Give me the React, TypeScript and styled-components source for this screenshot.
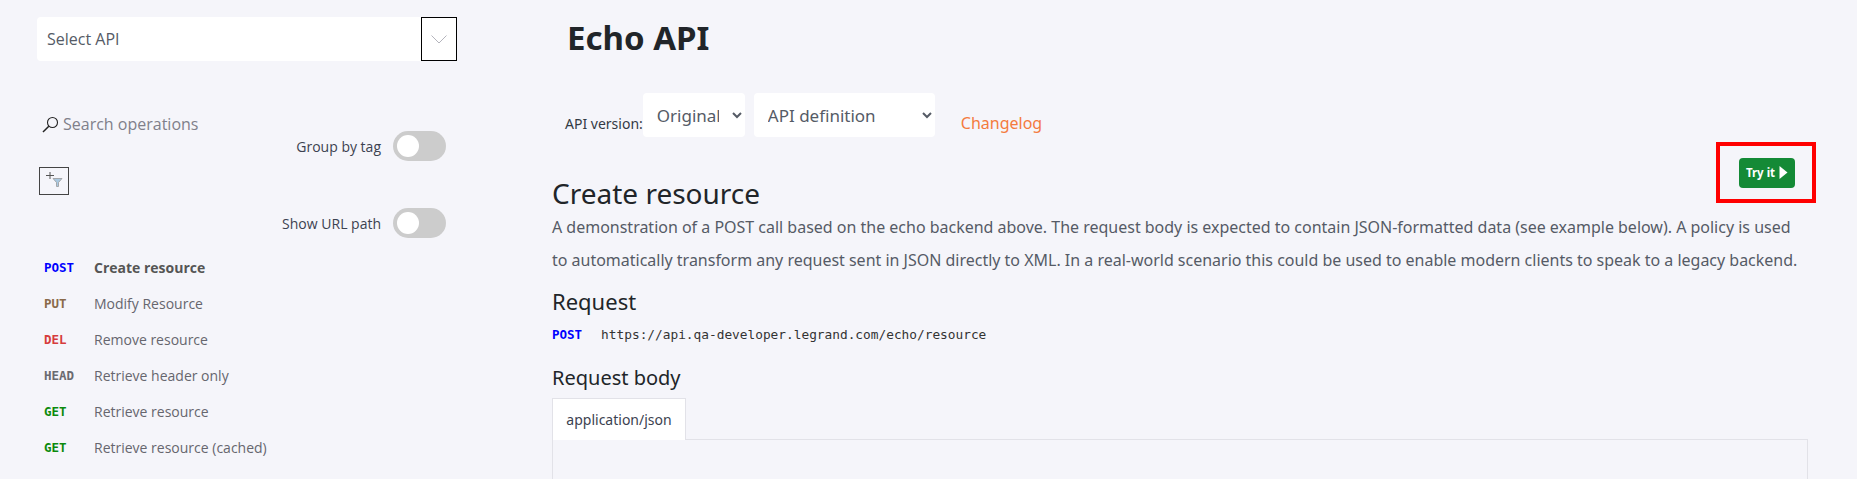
import styled, { createGlobalStyle } from 'styled-components'

const methodColors: Record<string, string> = {
  POST: '#0000ff',
  PUT: '#8a6a4a',
  DEL: '#d63c3c',
  HEAD: '#6a6a70',
  GET: '#0c8a0c',
}

const operations = [
  { method: 'POST', name: 'Create resource', active: true },
  { method: 'PUT', name: 'Modify Resource' },
  { method: 'DEL', name: 'Remove resource' },
  { method: 'HEAD', name: 'Retrieve header only' },
  { method: 'GET', name: 'Retrieve resource' },
  { method: 'GET', name: 'Retrieve resource (cached)' },
]

function App() {
  return (
    <>
      <GlobalStyle />
      <Page>
        <Sidebar>
          <ApiPicker>
            <ApiPickerText>Select API</ApiPickerText>
            <ChevronBox>
              <svg width="16" height="9" viewBox="0 0 16 9" fill="none">
                <path d="M0.5 0.5 L8 8 L15.5 0.5" stroke="#b4b4bc" strokeWidth="1" />
              </svg>
            </ChevronBox>
          </ApiPicker>
          <SearchRow>
            <svg width="17" height="17" viewBox="0 0 17 17" fill="none">
              <circle cx="10.5" cy="6.5" r="5" stroke="#222" strokeWidth="1.1" />
              <path d="M6.8 10.2 L1 16" stroke="#222" strokeWidth="1.5" />
            </svg>
            <SearchText>Search operations</SearchText>
          </SearchRow>
          <ToggleRow>
            <ToggleLabel>Group by tag</ToggleLabel>
            <Toggle />
          </ToggleRow>
          <FilterButton>
            <svg width="22" height="20" viewBox="0 0 22 20" fill="none">
              <path d="M3 4.500 H11 M7 1 V8" stroke="#555" strokeWidth="1" />
              <path d="M10 7.500 H19 L15.500 11.500 V15.500 H13.500 V11.500 Z" fill="#a9c8e0" stroke="#999" strokeWidth="0.8" />
            </svg>
          </FilterButton>
          <ToggleRow $tight>
            <ToggleLabel>Show URL path</ToggleLabel>
            <Toggle />
          </ToggleRow>
          <OperationList>
            {operations.map((op) => (
              <Operation key={op.name}>
                <Method $color={methodColors[op.method]}>{op.method}</Method>
                <OperationName $active={op.active}>{op.name}</OperationName>
              </Operation>
            ))}
          </OperationList>
        </Sidebar>
        <Main>
          <Title>Echo API</Title>
          <VersionRow>
            <VersionLabel>API version:</VersionLabel>
            <Picker $width={102} defaultValue="Original">
              <option>Original</option>
            </Picker>
            <Picker $width={181} defaultValue="API definition">
              <option>API definition</option>
            </Picker>
            <Changelog>Changelog</Changelog>
          </VersionRow>
          <TryItFrame>
            <TryIt>
              Try it
              <svg width="9" height="13" viewBox="0 0 9 13">
                <path d="M0.5 0 L8.500 6.500 L0.5 13 Z" fill="#fff" />
              </svg>
            </TryIt>
          </TryItFrame>
          <OperationTitle>Create resource</OperationTitle>
          <Description>
            A demonstration of a POST call based on the echo backend above. The request body is
            expected to contain JSON-formatted data (see example below). A policy is used to
            automatically transform any request sent in JSON directly to XML. In a real-world
            scenario this could be used to enable modern clients to speak to a legacy backend.
          </Description>
          <SectionTitle>Request</SectionTitle>
          <RequestLine>
            <RequestMethod>POST</RequestMethod>
            <RequestUrl>https://api.qa-developer.legrand.com/echo/resource</RequestUrl>
          </RequestLine>
          <BodyTitle>Request body</BodyTitle>
          <Tab>application/json</Tab>
          <TabPanel />
        </Main>
      </Page>
    </>
  )
}

const GlobalStyle = createGlobalStyle`
  html, body {
    margin: 0;
    height: 100%;
    overflow: hidden;
    background: #f5f5fa;
  }
`

const Page = styled.div`
  display: flex;
  width: 1857px;
  height: 479px;
  overflow: hidden;
  background: #f5f5fa;
  font-family: 'Noto Sans', sans-serif;
`

const Sidebar = styled.aside`
  width: 420px;
  margin-left: 37px;
  padding-top: 17px;
  flex-shrink: 0;
  font-family: 'Open Sans', sans-serif;
`

const ApiPicker = styled.div`
  display: flex;
  align-items: center;
  justify-content: space-between;
  height: 44px;
  background: #fff;
  border-radius: 4px;
`

const ApiPickerText = styled.span`
  margin-left: 10px;
  font-size: 16px;
  color: #555b66;
`

const ChevronBox = styled.div`
  display: flex;
  align-items: center;
  justify-content: center;
  box-sizing: border-box;
  width: 36px;
  height: 44px;
  border: 1px solid #000;
`

const SearchRow = styled.div`
  display: flex;
  align-items: center;
  gap: 4px;
  height: 24px;
  margin: 51px 0 0 5px;
`

const SearchText = styled.span`
  font-size: 16px;
  color: #80808a;
`

const ToggleRow = styled.div<{ $tight?: boolean }>`
  display: flex;
  align-items: center;
  justify-content: flex-end;
  gap: 12px;
  height: 30px;
  margin-top: ${({ $tight }) => ($tight ? '13px' : '-5px')};
  padding-right: 11px;
`

const ToggleLabel = styled.span`
  font-size: 14px;
  color: #3c4250;
`

const Toggle = styled.div`
  position: relative;
  width: 53px;
  height: 30px;
  border-radius: 15px;
  background: #ccc;

  &::before {
    content: '';
    position: absolute;
    left: 4px;
    top: 4px;
    width: 22px;
    height: 22px;
    border-radius: 50%;
    background: #fff;
  }
`

const FilterButton = styled.div`
  display: flex;
  align-items: center;
  justify-content: center;
  box-sizing: border-box;
  width: 30px;
  height: 28px;
  margin: 6px 0 0 2px;
  border: 1px solid #444;
`

const OperationList = styled.ul`
  list-style: none;
  margin: 11px 0 0;
  padding: 0 0 0 7px;
`

const Operation = styled.li`
  display: flex;
  align-items: center;
  height: 36px;
`

const Method = styled.span<{ $color: string }>`
  width: 50px;
  font-family: 'DejaVu Sans Mono', monospace;
  font-size: 12.5px;
  font-weight: 700;
  color: ${({ $color }) => $color};
`

const OperationName = styled.span<{ $active?: boolean }>`
  font-size: 14px;
  font-weight: ${({ $active }) => ($active ? 700 : 400)};
  color: ${({ $active }) => ($active ? '#555' : '#66666e')};
`

const Main = styled.main`
  position: relative;
  flex: 1;
  margin-left: 95px;
  margin-right: 41px;
`

const Title = styled.h1`
  margin: 16px 0 0 15px;
  font-size: 33px;
  line-height: 44px;
  font-weight: 700;
  color: #212529;
`

const VersionRow = styled.div`
  display: flex;
  align-items: flex-start;
  margin: 33px 0 0 13px;
  height: 44px;
`

const VersionLabel = styled.span`
  margin-top: 21px;
  font-size: 14px;
  line-height: 20px;
  color: #333a45;
`

const Picker = styled.select<{ $width: number }>`
  width: ${({ $width }) => $width}px;
  height: 44px;
  margin-right: 9px;
  padding: 0 10px;
  border: none;
  border-radius: 4px;
  background-color: #fff;
  font-family: 'Noto Sans', sans-serif;
  font-size: 17px;
  line-height: 22px;
  color: #555b66;
`

const Changelog = styled.a`
  margin: 18px 0 0 17px;
  font-size: 16px;
  line-height: 24px;
  color: #f47b3e;
`

const TryItFrame = styled.div`
  position: absolute;
  right: 0;
  top: 142px;
  display: flex;
  align-items: center;
  justify-content: center;
  box-sizing: border-box;
  width: 100px;
  height: 61px;
  padding-left: 2px;
  border: 4px solid #ff0000;
`

const TryIt = styled.div`
  display: flex;
  align-items: center;
  justify-content: center;
  gap: 4px;
  width: 56px;
  height: 30px;
  border-radius: 4px;
  background: #148a36;
  font-size: 11.5px;
  font-weight: 700;
  color: #fff;
`

const OperationTitle = styled.h2`
  margin: 37px 0 0;
  font-size: 28px;
  line-height: 38px;
  font-weight: 400;
  color: #212529;
`

const Description = styled.p`
  margin: -1px 8px 0 0;
  font-size: 16px;
  line-height: 33px;
  letter-spacing: -0.01px;
  color: #555b66;
`

const SectionTitle = styled.h3`
  margin: 9px 0 0;
  font-size: 22px;
  line-height: 30px;
  font-weight: 400;
  color: #212529;
`

const RequestLine = styled.div`
  display: flex;
  gap: 19px;
  margin-top: 9px;
  font-family: 'DejaVu Sans Mono', monospace;
  font-size: 12.8px;
  line-height: 20px;
`

const RequestMethod = styled.span`
  font-weight: 700;
  font-size: 12.5px;
  color: #0000ff;
`

const RequestUrl = styled.span`
  color: #333;
`

const BodyTitle = styled.h4`
  margin: 18px 0 0;
  font-size: 20px;
  line-height: 30px;
  font-weight: 400;
  color: #212529;
`

const Tab = styled.div`
  position: relative;
  z-index: 1;
  display: flex;
  align-items: center;
  justify-content: center;
  box-sizing: border-box;
  width: 134px;
  height: 42px;
  margin-top: 5px;
  background: #fff;
  border: 1px solid #e2e2e8;
  border-bottom: none;
  font-size: 14px;
  color: #3c4250;
`

const TabPanel = styled.div`
  height: 60px;
  margin: -1px 8px 0 0;
  border: 1px solid #e2e2e8;
`

export default App
